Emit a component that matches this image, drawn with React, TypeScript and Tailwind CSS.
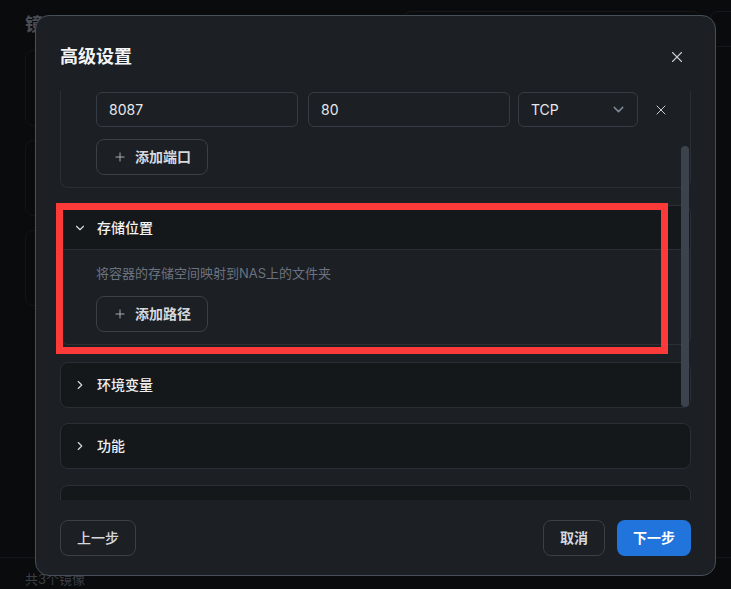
import React from "react";
import { ChevronDown, ChevronRight, Plus, X } from "lucide-react";

const font = "font-['Inter','Noto_Sans_CJK_SC',sans-serif]";

const AddButton = ({ label }: { label: string }) => (
  <button className="flex h-9 items-center gap-2 rounded-lg border border-[#3a4048] px-4 text-sm font-semibold text-[#d5d9de]">
    <Plus size={14} strokeWidth={1.5} className="text-[#b8bec6]" />
    <span>{label}</span>
  </button>
);

const Collapsed = ({ title, className = "" }: { title?: string; className?: string }) => (
  <div className={`shrink-0 rounded-lg border border-[#2b2f35] bg-[#15181b] ${className}`}>
    <div className="flex h-[44px] items-center gap-2.5 px-3 text-sm font-medium text-[#eef0f3]">
      {title && <ChevronRight size={14} strokeWidth={2} className="text-[#d5d9de]" />}
      {title && <span>{title}</span>}
    </div>
  </div>
);

const PortRow = () => (
  <div className="flex items-center">
    <input
      readOnly
      defaultValue="8087"
      className="h-[35px] w-[202px] rounded-md border border-[#363c45] bg-[#1c1f24] px-3 text-sm text-[#e6e8eb] outline-none"
    />
    <input
      readOnly
      defaultValue="80"
      className="ml-[10px] h-[35px] w-[202px] rounded-md border border-[#363c45] bg-[#1c1f24] px-3 text-sm text-[#e6e8eb] outline-none"
    />
    <div className="ml-2 flex h-[35px] w-[120px] items-center justify-between rounded-md border border-[#363c45] pl-3 pr-2.5 text-sm text-[#e6e8eb]">
      <span>TCP</span>
      <ChevronDown size={17} strokeWidth={2} className="text-[#7d8896]" />
    </div>
    <button className="ml-[11px] flex h-6 w-6 items-center justify-center text-[#c9ced4]">
      <X size={16} strokeWidth={1.5} />
    </button>
  </div>
);

export default function App() {
  return (
    <div className={`relative h-[589px] w-[731px] overflow-hidden bg-[#0a0b0d] ${font}`}>
      {/* page behind the dialog */}
      <div className="flex h-full flex-col">
        <div className="flex items-start px-[25px] pt-[11px]">
          <h1 className="text-lg font-bold leading-7 text-[#4a4d52]">镜像</h1>
          <div className="ml-auto h-9 w-[298px] shrink-0 rounded-lg border border-[#16181b]" />
          <div className="-mr-[40px] ml-[9px] h-9 w-9 shrink-0 rounded-lg border border-[#16181b]" />
        </div>
        <div className="mt-[3px] flex flex-1 flex-col gap-[14px] px-[25px]">
          <div className="h-[76px] rounded-lg border border-[#121417]" />
          <div className="h-[76px] rounded-lg border border-[#121417]" />
          <div className="h-[76px] rounded-lg border border-[#121417]" />
        </div>
        <div className="h-[32px] border-t border-[#141619] px-[25px] pt-[11px] text-[13px] leading-5 text-[#3c3f44]">
          共3个镜像
        </div>
      </div>

      {/* dialog */}
      <div className="absolute left-[35px] top-[15px] flex h-[561px] w-[681px] flex-col rounded-[14px] border border-[#474f5b] bg-[#1c1f24]">
        <div className="flex h-[75px] shrink-0 items-center justify-between px-6 pb-[9px] pt-[16px]">
          <h2 className="text-lg font-bold leading-7 text-[#f3f4f6]">高级设置</h2>
          <button className="flex h-7 w-7 items-center justify-center text-[#c9ced4]">
            <X size={18} strokeWidth={1.5} />
          </button>
        </div>

        <div className="relative h-[409px] shrink-0 overflow-hidden px-6">
          <div className="flex flex-col">
            <div className="shrink-0 rounded-b-lg border-x border-b border-[#2b2f35] pb-3 pl-[35px] pt-px">
              <PortRow />
              <div className="mt-3 flex">
                <AddButton label="添加端口" />
              </div>
            </div>

            <div className="mt-[17px] shrink-0 overflow-hidden rounded-lg border border-[#2b2f35]">
              <div className="flex h-[43px] items-center gap-2.5 bg-[#15181b] px-3 text-sm font-medium text-[#f3f4f6]">
                <ChevronDown size={14} strokeWidth={2} className="text-[#d5d9de]" />
                <span>存储位置</span>
              </div>
              <div className="border-t border-[#2b2f35] pb-3 pl-[35px] pt-[13px]">
                <p className="text-[13px] leading-5 text-[#6b7380]">将容器的存储空间映射到NAS上的文件夹</p>
                <div className="mt-[13px] flex">
                  <AddButton label="添加路径" />
                </div>
              </div>
            </div>

            <Collapsed title="环境变量" className="mt-[17px]" />
            <Collapsed title="功能" className="mt-[15px]" />
            <Collapsed className="mt-4" />
          </div>
          <div className="absolute right-[26px] top-[55px] h-[261px] w-2 rounded-full bg-[#3b434c]" />
        </div>

        <div className="flex items-center px-6 pt-5">
          <button className="h-9 rounded-lg border border-[#3a4048] px-4 text-sm font-medium text-[#d5d9de]">
            上一步
          </button>
          <button className="ml-auto h-9 rounded-lg border border-[#3a4048] px-4 text-sm font-semibold text-[#d5d9de]">
            取消
          </button>
          <button className="ml-3 h-9 rounded-lg bg-[#2174dc] px-4 text-sm font-semibold text-white">
            下一步
          </button>
        </div>
      </div>

      {/* highlight annotation */}
      <div className="pointer-events-none absolute left-[56px] top-[203px] h-[151px] w-[612px] border-[7px] border-[#fd3a3a]" />
    </div>
  );
}
